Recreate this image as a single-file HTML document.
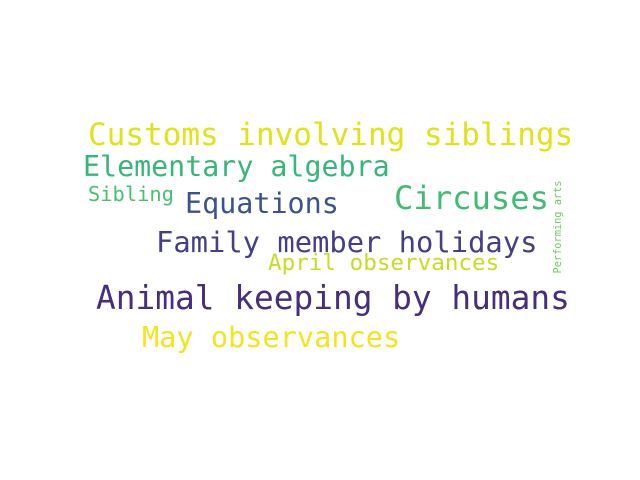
<!DOCTYPE html>
<html><head><style>
body{margin:0;width:640px;height:480px;background:#fff;position:relative;overflow:hidden;font-family:"DejaVu Sans Mono","Liberation Mono",monospace;}
span{position:absolute;white-space:nowrap;line-height:1;}
</style></head><body>
<span style="left:88px;top:120px;font-size:31px;color:#dfe318">Customs involving siblings</span>
<span style="left:83px;top:153px;font-size:28.3px;color:#35b779">Elementary algebra</span>
<span style="left:88px;top:184px;font-size:20.4px;color:#48c16e">Sibling</span>
<span style="left:185px;top:190px;font-size:28.4px;color:#3b528b">Equations</span>
<span style="left:394px;top:182px;font-size:32.2px;color:#3fbc73">Circuses</span>
<span style="left:156px;top:228px;font-size:28.8px;color:#433e85">Family member holidays</span>
<span style="left:268px;top:252px;font-size:22.6px;color:#c2df23">April observances</span>
<span style="left:96px;top:282px;font-size:32.8px;color:#472d7b">Animal keeping by humans</span>
<span style="left:142px;top:323px;font-size:28.6px;color:#f1e51d">May observances</span>
<span style="left:558px;top:227px;font-size:10.3px;color:#6ccd5a;transform:translate(-50%,-50%) rotate(-90deg)">Performing arts</span>
</body></html>
